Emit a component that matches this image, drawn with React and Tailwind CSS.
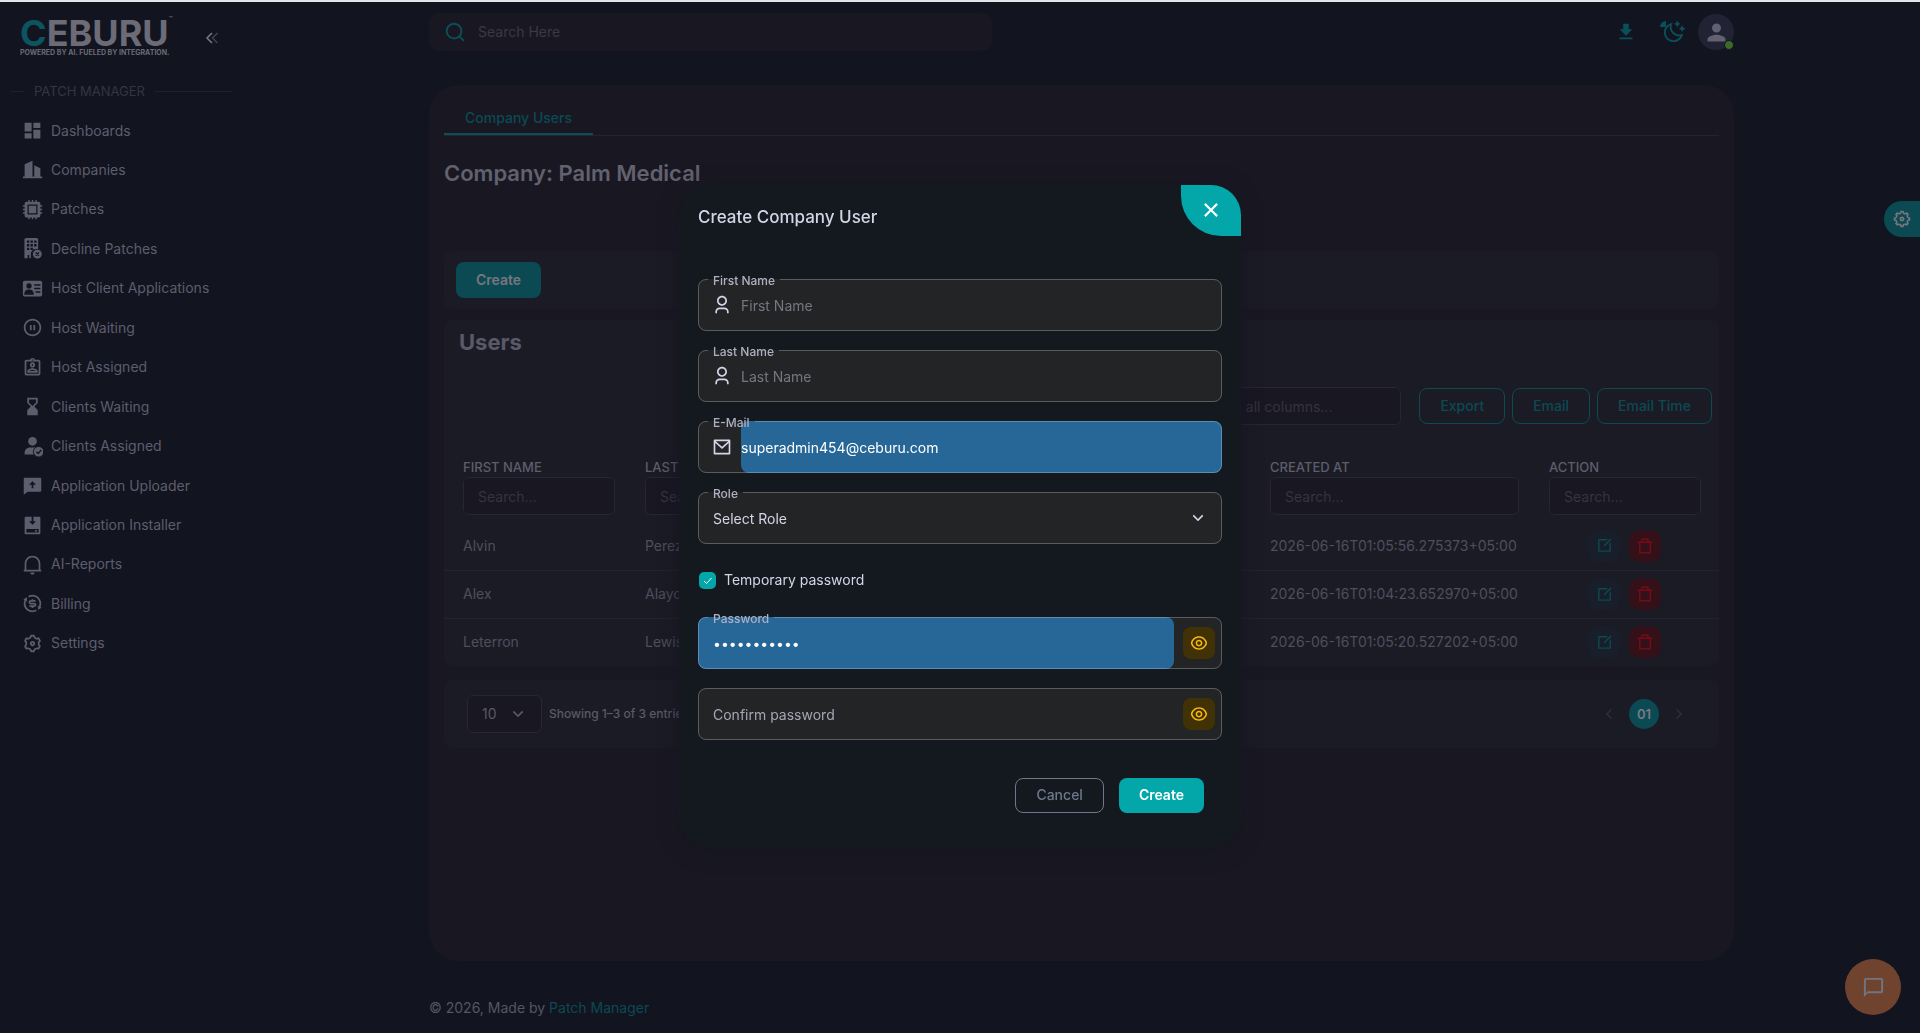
import {
  RiArrowDownSLine,
  RiArrowLeftSLine,
  RiArrowRightSLine,
  RiChatUploadFill,
  RiCloseLine,
  RiDeleteBin7Line,
  RiEditBoxLine,
  RiExchangeDollarLine,
  RiEyeLine,
  RiInstallFill,
  RiMailLine,
  RiMoonClearLine,
  RiNotification2Line,
  RiPauseCircleLine,
  RiSearchLine,
  RiSettings3Line,
  RiSettings5Line,
  RiUser3Line,
} from "react-icons/ri";
import {
  MdChatBubbleOutline,
  MdDashboard,
  MdDownload,
  MdHourglassBottom,
  MdOutlineAssignmentInd,
  MdPerson,
} from "react-icons/md";

function BuildingsIcon({ className }) {
  return (
    <svg viewBox="0 0 24 24" fill="currentColor" className={className}>
      <path d="M1 20h2V6l9-4v18h2V7l7 3.500V20h2v2H1z" />
    </svg>
  );
}

function ChipIcon({ className }) {
  return (
    <svg viewBox="0 0 24 24" className={className}>
      <path d="M8 1v22M12 1v22M16 1v22M1 8h22M1 12h22M1 16h22" stroke="currentColor" strokeWidth="1.600" />
      <rect x="3" y="3" width="18" height="18" rx="2" fill="currentColor" />
      <rect x="7" y="7" width="10" height="10" fill="currentColor" stroke="#121420" strokeWidth="1.400" />
    </svg>
  );
}

function BuildingDismissIcon({ className }) {
  return (
    <svg viewBox="0 0 24 26" className={className}>
      <path d="M4 0h13a2 2 0 0 1 2 2v12H13l-3 4v7H8v-4H6v4H2V2a2 2 0 0 1 2-2z" fill="currentColor" />
      <path
        d="M5 3h3v3H5zM9.500 3h3v3h-3zM14 3h3v3h-3zM5 7.500h3v3H5zM9.500 7.500h3v3h-3zM14 7.500h3v3h-3zM5 12h3v3H5zM9.500 12h3v3h-3z"
        fill="#121420"
      />
      <circle cx="18" cy="20" r="6" fill="currentColor" stroke="#121420" />
      <path d="m16 18 4 4m0-4-4 4" stroke="#121420" strokeWidth="1.500" />
    </svg>
  );
}

function IdCardIcon({ className }) {
  return (
    <svg viewBox="0 0 24 24" className={className}>
      <rect x="1" y="3" width="22" height="18" rx="2" fill="currentColor" />
      <circle cx="8" cy="9" r="3" fill="#121420" />
      <path d="M2.500 19c0-4 2-6 5.500-6s5.500 2 5.500 6z" fill="#121420" />
      <path d="M14 8h7M14 12h7M15.500 16H21" stroke="#121420" strokeWidth="1.500" />
    </svg>
  );
}

function PersonCheckIcon({ className }) {
  return (
    <svg viewBox="0 0 24 24" className={className}>
      <circle cx="12" cy="6" r="5" fill="currentColor" />
      <path d="M3 21v-2c0-4 3-6 7-6h7l-4 8z" fill="currentColor" />
      <circle cx="19" cy="18" r="6" fill="currentColor" stroke="#121420" />
      <path d="m16.500 18 2 2 3.500-4" fill="none" stroke="#121420" strokeWidth="1.600" />
    </svg>
  );
}

const menu = [
  { label: "Dashboards", icon: MdDashboard },
  { label: "Companies", icon: BuildingsIcon },
  { label: "Patches", icon: ChipIcon },
  { label: "Decline Patches", icon: BuildingDismissIcon },
  { label: "Host Client Applications", icon: IdCardIcon },
  { label: "Host Waiting", icon: RiPauseCircleLine },
  { label: "Host Assigned", icon: MdOutlineAssignmentInd },
  { label: "Clients Waiting", icon: MdHourglassBottom },
  { label: "Clients Assigned", icon: PersonCheckIcon },
  { label: "Application Uploader", icon: RiChatUploadFill },
  { label: "Application Installer", icon: RiInstallFill },
  { label: "AI-Reports", icon: RiNotification2Line },
  { label: "Billing", icon: RiExchangeDollarLine },
  { label: "Settings", icon: RiSettings3Line },
];

const users = [
  { first: "Alvin", last: "Perez", created: "2026-06-16T01:05:56.275373+05:00" },
  { first: "Alex", last: "Alayo", created: "2026-06-16T01:04:23.652970+05:00" },
  { first: "Leterron", last: "Lewis", created: "2026-06-16T01:05:20.527202+05:00" },
];

function Logo() {
  return (
    <a href="#" className="block whitespace-nowrap">
      <span className="flex items-start text-4xl leading-[28px] font-bold text-[#6c6b76]">
        <span className="text-[#0b5560]">C</span>EBURU
        <sup className="text-[6px] leading-[6px]">™</sup>
      </span>
      <span className="mt-0.5 block text-[7px] leading-[8px] font-bold text-[#6c6b76]">
        POWERED BY AI. FUELED BY INTEGRATION.
      </span>
    </a>
  );
}

function Sidebar() {
  return (
    <aside className="w-[243px] shrink-0 pt-[18px]">
      <div className="flex h-9 items-center gap-8 pl-5">
        <Logo />
        <button aria-label="Collapse menu">
          <svg viewBox="0 0 14 12" className="h-3 w-3.5" fill="none" strokeWidth="1.600">
            <path d="M7 1 2 6l5 5" stroke="#777683" />
            <path d="M12.500 1l-5 5 5 5" stroke="#41404d" />
          </svg>
        </button>
      </div>
      <div className="mt-[25px] flex items-center gap-2.5 pr-[11px] pl-[11px] text-[13px] leading-5 text-[#363542]">
        <span className="h-px w-[13px] bg-[#20202c]" />
        PATCH MANAGER
        <span className="h-px flex-1 bg-[#20202c]" />
      </div>
      <nav className="mt-[11px]">
        <ul className="flex h-[550px] flex-col justify-between">
          {menu.map(({ label, icon: Icon }) => (
            <li key={label}>
              <a href="#" className="flex h-[37px] items-center gap-2 pl-[22px] text-sm text-[#5e5d6d]">
                <Icon className="size-[21px]" />
                {label}
              </a>
            </li>
          ))}
        </ul>
      </nav>
    </aside>
  );
}

function Header() {
  return (
    <header className="flex h-[38px] items-center justify-between">
      <label className="flex h-full w-[563px] items-center gap-3 rounded-[10px] bg-[#191822] pl-[15px] text-[#0b4f59]">
        <RiSearchLine className="size-[22px]" />
        <input
          aria-label="Search"
          placeholder="Search Here"
          className="flex-1 text-sm outline-none placeholder:text-[#3a3945]"
        />
      </label>
      <div className="flex items-center text-[#0b4f59]">
        <button aria-label="Download" className="mr-[25px]">
          <MdDownload className="size-[22px]" />
        </button>
        <button aria-label="Theme" className="relative mr-[13px]">
          <RiMoonClearLine className="size-[23px]" />
          <span className="absolute top-0 -left-0.5 size-1.5 rounded-tl-full bg-[#0b4f59]" />
        </button>
        <button aria-label="Account" className="relative flex size-9 items-center justify-center rounded-full bg-[#212233]">
          <MdPerson className="size-[27px] text-[#62616f]" />
          <span className="absolute right-0 bottom-0 size-2.5 rounded-full border border-[#121420] bg-[#3a6a26]" />
        </button>
      </div>
    </header>
  );
}

function OutlineButton({ children }) {
  return (
    <button className="h-9 rounded-lg border border-[#0b4a53] px-5 text-sm font-medium text-[#0b4a53]">
      {children}
    </button>
  );
}

function ColumnHead({ label }) {
  return (
    <th className="p-0 pr-[15px] pl-[15px] text-left font-medium first:pl-[19px] last:pr-[18px]">
      <span className="block text-[13px] leading-5 text-[#5e5d6d]">{label}</span>
      <input
        aria-label={label}
        placeholder="Search..."
        className="mb-[7px] block h-[38px] w-full rounded-md border border-[#272632] bg-[#181722] px-3.5 text-sm font-normal outline-none placeholder:text-[#353440]"
      />
    </th>
  );
}

function UsersCard() {
  return (
    <section className="mt-[11px] overflow-hidden rounded-lg bg-[#1b1b25] pt-2">
      <h2 className="pl-[15px] text-[22px] leading-7 font-bold text-[#5a5968]">Users</h2>
      <div className="mt-[31px] flex items-center justify-end pr-[7px]">
        <input
          aria-label="Search all columns"
          placeholder="Search all columns..."
          className="mr-[18px] h-[38px] w-[221px] rounded-md border border-[#272632] bg-[#181722] px-3.5 text-sm outline-none placeholder:text-[#353440]"
        />
        <div className="flex gap-[7px]">
          <OutlineButton>Export</OutlineButton>
          <OutlineButton>Email</OutlineButton>
          <OutlineButton>Email Time</OutlineButton>
        </div>
      </div>
      <table className="mt-8 w-full table-fixed border-collapse text-sm">
        <colgroup>
          <col className="w-[186px]" />
          <col className="w-[182px]" />
          <col />
          <col className="w-[279px]" />
          <col className="w-[185px]" />
        </colgroup>
        <thead>
          <tr>
            <ColumnHead label="FIRST NAME" />
            <ColumnHead label="LAST NAME" />
            <ColumnHead label="EMAIL" />
            <ColumnHead label="CREATED AT" />
            <ColumnHead label="ACTION" />
          </tr>
        </thead>
        <tbody>
          {users.map((user) => (
            <tr key={user.first} className="h-12 border-b border-[#24232f] text-[#4f4e5d] last:border-0">
              <td className="pl-[19px]">{user.first}</td>
              <td className="pl-[15px]">{user.last}</td>
              <td />
              <td className="pl-[15px] whitespace-nowrap">{user.created}</td>
              <td>
                <div className="flex justify-center gap-[9px] pr-1">
                  <button aria-label="Edit" className="flex size-8 items-center justify-center rounded-[10px] bg-[#181f2a] text-[#0b4a53]">
                    <RiEditBoxLine className="size-[17px]" />
                  </button>
                  <button aria-label="Delete" className="flex size-8 items-center justify-center rounded-[10px] bg-[#321118] text-[#780a18]">
                    <RiDeleteBin7Line className="size-[18px]" />
                  </button>
                </div>
              </td>
            </tr>
          ))}
        </tbody>
      </table>
    </section>
  );
}

function Pagination() {
  return (
    <section className="mt-3.5 flex h-[68px] items-center rounded-lg bg-[#1b1b25] pr-[30px] pl-[23px]">
      <div className="relative">
        <select
          aria-label="Rows per page"
          className="h-[38px] w-[75px] appearance-none rounded-md border border-[#272632] bg-[#181722] pl-3.5 text-sm text-[#5a5968]"
        >
          <option>10</option>
        </select>
        <RiArrowDownSLine className="pointer-events-none absolute top-[9px] right-3.5 size-5 text-[#5a5968]" />
      </div>
      <p className="ml-[7px] text-xs font-medium text-[#5a5968]">Showing 1–3 of 3 entries</p>
      <div className="ml-auto flex items-center gap-2.5 text-sm text-[#2c2b38]">
        <button aria-label="Previous page">
          <RiArrowLeftSLine className="size-5" />
        </button>
        <button className="size-[30px] rounded-full bg-[#0b4a53] text-[13px] font-semibold text-[#7b7a86]">01</button>
        <button aria-label="Next page">
          <RiArrowRightSLine className="size-5" />
        </button>
      </div>
    </section>
  );
}

function Field({ id, label, children }) {
  return (
    <div className="relative flex h-[52px] items-center rounded-lg bg-[#232426]">
      {children}
      <fieldset className="pointer-events-none absolute inset-0 rounded-lg border border-white/25 px-[9px]">
        {label && (
          <legend className="h-0 px-[5px] text-xs leading-[3px] font-medium text-[#b0afc0]">
            <label htmlFor={id}>{label}</label>
          </legend>
        )}
      </fieldset>
    </div>
  );
}

function EyeButton() {
  return (
    <button
      type="button"
      aria-label="Show password"
      className="mr-[7px] ml-auto flex size-8 items-center justify-center rounded-lg bg-[#413205] text-[#fdb90c]"
    >
      <RiEyeLine className="size-[18px]" />
    </button>
  );
}

function CreateUserModal() {
  return (
    <div className="fixed inset-0 z-10 flex items-center justify-center">
      <div
        role="dialog"
        aria-labelledby="modal-title"
        className="relative w-[562px] rounded-[30px] bg-[#141920] px-[19px] pt-[19px] pb-9 shadow-[0_2px_20px_rgba(20,20,33,0.9)]"
      >
        <button
          aria-label="Close"
          className="absolute top-0 right-0 flex h-[51px] w-[60px] items-center justify-center rounded-tr-[30px] rounded-bl-[40px] bg-[#03a6a9] text-white"
        >
          <RiCloseLine className="size-[26px]" />
        </button>
        <h1 id="modal-title" className="text-[17px] leading-[26px] font-medium text-[#d5d4e6]">
          Create Company User
        </h1>
        <form className="mt-[49px] flex flex-col gap-[19px] text-sm" onSubmit={(e) => e.preventDefault()}>
          <Field id="first-name" label="First Name">
            <RiUser3Line className="ml-3.5 size-5 text-[#d5d4e6]" />
            <input id="first-name" placeholder="First Name" className="ml-[9px] h-full flex-1 pt-0.5 outline-none placeholder:text-[#77767f]" />
          </Field>
          <Field id="last-name" label="Last Name">
            <RiUser3Line className="ml-3.5 size-5 text-[#d5d4e6]" />
            <input id="last-name" placeholder="Last Name" className="ml-[9px] h-full flex-1 pt-0.5 outline-none placeholder:text-[#77767f]" />
          </Field>
          <Field id="email" label="E-Mail">
            <RiMailLine className="ml-3.5 size-5 text-[#d5d4e6]" />
            <input
              id="email"
              type="email"
              defaultValue="superadmin454@ceburu.com"
              className="ml-[9px] h-full flex-1 rounded-lg bg-[#266798] pt-0.5 text-white outline-none"
            />
          </Field>
          <Field id="role" label="Role">
            <select id="role" className="h-full w-full appearance-none pt-0.5 pl-[15px] text-[#d5d4e6] outline-none">
              <option>Select Role</option>
            </select>
            <RiArrowDownSLine className="pointer-events-none absolute right-3.5 size-5 text-[#d5d4e6]" />
          </Field>
          <div className="flex h-[35px] items-center gap-2">
            <span className="relative flex">
              <input
                id="temporary"
                type="checkbox"
                defaultChecked
                className="ml-px size-[17px] appearance-none rounded-[5px] bg-[#03a6a9]"
              />
              <svg viewBox="0 0 17 17" className="pointer-events-none absolute right-0 size-[17px]" fill="none" stroke="white">
                <path d="m5 9 2.500 2.500 5-5.500" />
              </svg>
            </span>
            <label htmlFor="temporary" className="text-[#d5d4e6]">
              Temporary password
            </label>
          </div>
          <Field id="password" label="Password">
            <input
              id="password"
              type="password"
              defaultValue="superadmin1"
              className="h-full w-[476px] rounded-lg bg-[#266798] pt-0.5 pl-[15px] text-white outline-none"
            />
            <EyeButton />
          </Field>
          <Field>
            <input
              aria-label="Confirm password"
              placeholder="Confirm password"
              className="h-full flex-1 pt-0.5 pl-[15px] outline-none placeholder:text-[#a6a5b4]"
            />
            <EyeButton />
          </Field>
          <div className="mt-[19px] mr-[18px] flex justify-end gap-[15px]">
            <button type="button" className="h-[35px] rounded-lg border border-[#6d788d] px-5 font-medium text-[#6d788d]">
              Cancel
            </button>
            <button className="h-[35px] rounded-lg bg-[#03a6a9] px-5 font-semibold text-white">Create</button>
          </div>
        </form>
      </div>
    </div>
  );
}

export default function App() {
  return (
    <div className="flex min-h-screen border-t-2 border-[#e4e5ea] bg-[#121420] font-['Inter',sans-serif]">
      <Sidebar />
      <div className="flex flex-1 justify-center px-6">
        <div className="flex w-full max-w-[1305px] flex-col pt-[11px]">
          <Header />
          <main className="mt-[34px] flex-1 rounded-[30px] bg-[#191822] p-[15px]">
            <div className="border-b border-[#24232f]">
              <button className="h-[35px] border-b-2 border-[#0b4f59] px-[21px] pt-0.5 text-sm font-medium text-[#0b4a53]">
                Company Users
              </button>
            </div>
            <h1 className="mt-[21px] text-[22px] leading-8 font-semibold text-[#62616f]">Company: Palm Medical</h1>
            <section className="mt-[62px] rounded-lg bg-[#1b1b25] px-3 py-[11px]">
              <button className="h-9 rounded-lg bg-[#0b4a53] px-5 text-sm font-semibold text-[#77767f]">Create</button>
            </section>
            <UsersCard />
            <Pagination />
          </main>
          <footer className="flex h-[72px] items-end pb-[13px] text-sm leading-6 text-[#565564]">
            <p>
              © 2026, Made by{" "}
              <a href="#" className="text-[#0b4a53]">
                Patch Manager
              </a>
            </p>
          </footer>
        </div>
      </div>
      <button
        aria-label="Customize"
        className="fixed top-[201px] right-0 flex size-9 items-center justify-center rounded-l-full bg-[#0b4a53] text-[#77767f]"
      >
        <RiSettings5Line className="size-5" />
      </button>
      <button
        aria-label="Chat"
        className="fixed right-[19px] bottom-[18px] flex size-14 items-center justify-center rounded-full bg-[#70432f] text-[#6f7585]"
      >
        <MdChatBubbleOutline className="size-[23px]" />
      </button>
      <CreateUserModal />
    </div>
  );
}
